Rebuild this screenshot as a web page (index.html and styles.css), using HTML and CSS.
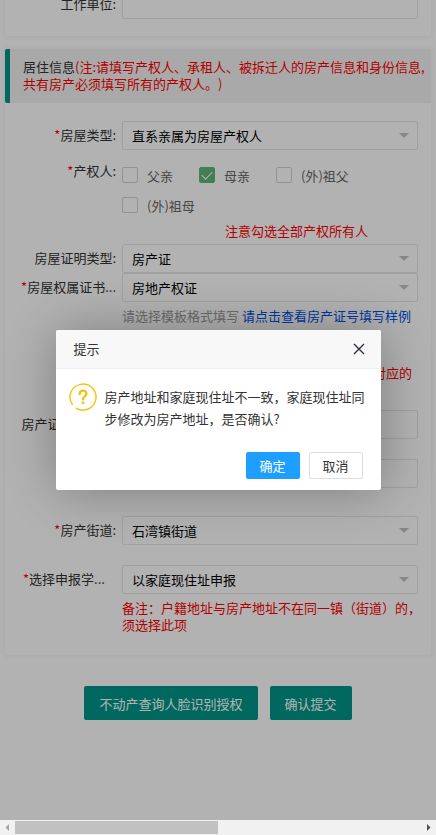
FILE: index.html
```html
<!DOCTYPE html>
<html lang="zh-CN">
<head>
    <meta charset="UTF-8">
    <meta name="viewport" content="width=device-width, initial-scale=1.0">
    <title>居住信息</title>
    <link rel="stylesheet" href="styles.css">
</head>
<body>
    <div class="viewport">
        <form class="page">
            <section class="card card-first">
                <div class="row">
                    <label class="label" for="company">工作单位:</label>
                    <div class="control"><input class="input" type="text" id="company"></div>
                </div>
            </section>

            <section class="card">
                <h2 class="card-title">居住信息<span class="red">(注:请填写产权人、承租人、被拆迁人的房产信息和身份信息,共有房产必须填写所有的产权人。)</span></h2>
                <div class="card-body">
                    <div class="row">
                        <label class="label" for="houseType"><span class="star">*</span>房屋类型:</label>
                        <div class="control select-box">
                            <select class="input" id="houseType"><option>直系亲属为房屋产权人</option></select>
                        </div>
                    </div>

                    <div class="row row-owner" role="group" aria-labelledby="ownerLabel">
                        <span class="label" id="ownerLabel"><span class="star">*</span>产权人:</span>
                        <div class="control checks">
                            <label class="check"><input type="checkbox">父亲</label>
                            <label class="check"><input type="checkbox" checked>母亲</label>
                            <label class="check"><input type="checkbox">(外)祖父</label>
                            <label class="check"><input type="checkbox">(外)祖母</label>
                        </div>
                    </div>
                    <p class="owner-note red">注意勾选全部产权所有人</p>

                    <div class="row">
                        <label class="label" for="certType">房屋证明类型:</label>
                        <div class="control select-box">
                            <select class="input" id="certType"><option>房产证</option></select>
                        </div>
                    </div>
                    <div class="row">
                        <label class="label" for="certBook"><span class="star">*</span>房屋权属证书...</label>
                        <div class="control">
                            <div class="select-box">
                                <select class="input" id="certBook"><option>房地产权证</option></select>
                            </div>
                            <p class="hint">请选择模板格式填写 <a href="#">请点击查看房产证号填写样例</a></p>
                        </div>
                    </div>

                    <p class="cert-note red">对应的</p>
                    <div class="row">
                        <label class="label" for="address">房产证详细地址:</label>
                        <div class="control"><input class="input" type="text" id="address"></div>
                    </div>
                    <div class="row row-gap">
                        <span class="label"></span>
                        <div class="control"><input class="input" type="text" aria-label="房产地址"></div>
                    </div>

                    <div class="row row-street">
                        <label class="label" for="street"><span class="star">*</span>房产街道:</label>
                        <div class="control select-box">
                            <select class="input" id="street"><option>石湾镇街道</option></select>
                        </div>
                    </div>
                    <div class="row row-gap">
                        <label class="label label-long" for="school"><span class="star">*</span>选择申报学...</label>
                        <div class="control">
                            <div class="select-box">
                                <select class="input" id="school"><option>以家庭现住址申报</option></select>
                            </div>
                            <p class="remark red">备注：户籍地址与房产地址不在同一镇（街道）的，须选择此项</p>
                        </div>
                    </div>
                </div>
            </section>

            <div class="actions">
                <button type="button" class="btn">不动产查询人脸识别授权</button>
                <button type="button" class="btn">确认提交</button>
            </div>
        </form>

        <div class="shade">
            <div class="dialog" role="dialog" aria-labelledby="dialogTitle">
                <div class="dialog-header">
                    <span id="dialogTitle">提示</span>
                    <button type="button" class="close" aria-label="关闭">
                        <svg width="12" height="12" viewBox="0 0 12 12" fill="none" stroke="#2e2d3c" stroke-width="1.4">
                            <path d="M1 1l10 10M11 1L1 11"/>
                        </svg>
                    </button>
                </div>
                <div class="dialog-content">
                    <svg class="ask" width="28" height="28" viewBox="0 0 28 28" fill="none" stroke="#f5c40d" stroke-linecap="round">
                        <path stroke-width="1.5" d="M7.500 25.300A13 13 0 1 0 3.300 21.400"/>
                        <path stroke-width="2.400" d="M10.700 11.100C10.700 6.500 17.400 6.600 17.400 10.700C17.400 13.400 14 13.300 14 16.300"/>
                        <circle cx="14" cy="19.800" r="1.500" fill="#f5c40d" stroke="none"/>
                    </svg>
                    <p>房产地址和家庭现住址不一致，家庭现住址同步修改为房产地址，是否确认?</p>
                </div>
                <div class="dialog-buttons">
                    <button type="button" class="dialog-btn primary">确定</button>
                    <button type="button" class="dialog-btn">取消</button>
                </div>
            </div>
        </div>
    </div>

    <div class="scrollbar">
        <svg width="15" height="15" viewBox="0 0 15 15" fill="#a3a3a3"><path d="M9 4v7L5.500 7.500z"/></svg>
        <div class="track"><div class="thumb"></div></div>
        <svg width="15" height="15" viewBox="0 0 15 15" fill="#505050"><path d="M6 4v7l3.500-3.500z"/></svg>
    </div>
</body>
</html>
```

FILE: styles.css
```css
* {
    box-sizing: border-box;
}
body {
    margin: 0;
    height: 100vh;
    display: flex;
    flex-direction: column;
    background-color: #fff;
    color: #333;
    font-family: "Noto Sans CJK SC", sans-serif;
    font-size: 13px;
    line-height: 17px;
    text-spacing-trim: space-all;
}
p, h2 {
    margin: 0;
}
button, input, select {
    font: inherit;
}
.red {
    color: #f00;
}
.viewport {
    position: relative;
    flex: 1;
    min-height: 0;
    overflow: hidden;
}
.page {
    margin: -10px 5px 0;
}
.card {
    margin-bottom: 13px;
    border-radius: 2px;
    box-shadow: 0 0 4px 1px rgba(0, 0, 0, 0.05);
}
.card-first {
    padding-bottom: 17px;
}
.card-title {
    padding: 9px 5px 11px 13px;
    border-left: 5px solid #009688;
    border-radius: 2px 0 0 2px;
    background-color: #f2f2f2;
    font-size: 13px;
    font-weight: 400;
}
.card-body {
    padding: 18px 0 22px;
}
.row {
    display: flex;
    padding-right: 13px;
}
.label {
    width: 117px;
    padding: 5px 6px 7px 0;
    text-align: right;
    white-space: nowrap;
}
.label-long {
    padding-left: 18px;
    text-align: left;
}
.star {
    color: #f00;
}
.control {
    flex: 1;
    min-width: 0;
}
.input {
    display: block;
    width: 100%;
    height: 29px;
    padding: 0 9px;
    border: 1px solid #e6e6e6;
    border-radius: 2px;
    background-color: #fff;
    color: #000;
    appearance: none;
}
.select-box {
    position: relative;
}
.select-box::after {
    content: "";
    position: absolute;
    right: 9px;
    top: 12px;
    border: 5px solid transparent;
    border-top-color: #c2c2c2;
    pointer-events: none;
}
.row-owner {
    padding-top: 7px;
}
.checks {
    display: flex;
    flex-wrap: wrap;
    gap: 14px 26px;
    padding-top: 10px;
}
.check {
    display: flex;
    align-items: center;
    gap: 9px;
    height: 16px;
    color: #666;
}
.check input {
    width: 16px;
    height: 16px;
    margin: 0;
    border: 1px solid #d2d2d2;
    border-radius: 2px;
    background-color: #fff;
    appearance: none;
}
.check input:checked {
    display: grid;
    place-items: center;
    border-color: #5fb878;
    background-color: #5fb878;
}
.check input:checked::after {
    content: "";
    width: 9px;
    height: 5px;
    margin-bottom: 3px;
    border: solid #fff;
    border-width: 0 0 1px 1px;
    transform: rotate(-45deg);
}
.owner-note {
    padding: 9px 0 5px 220px;
}
.hint {
    padding-top: 5px;
    color: #999;
    white-space: nowrap;
}
.hint a {
    color: #0050e6;
    text-decoration: none;
}
.cert-note {
    padding: 40px 19px 29px 0;
    text-align: right;
}
.row-gap {
    padding-top: 20px;
}
.row-street {
    padding-top: 28px;
}
.remark {
    margin-right: -8px;
    padding-top: 5px;
}
.actions {
    display: flex;
    justify-content: center;
    gap: 12px;
    margin-top: 31px;
}
.btn {
    height: 34px;
    padding: 0 15px;
    border: none;
    border-radius: 2px;
    background-color: #009688;
    color: #fff;
    cursor: pointer;
}

/* dialog */
.shade {
    position: absolute;
    inset: 0;
    display: flex;
    align-items: center;
    justify-content: center;
    background-color: rgba(0, 0, 0, 0.3);
}
.dialog {
    width: 325px;
    max-width: 90%;
    border-radius: 2px;
    background-color: #fff;
    box-shadow: 1px 1px 50px rgba(0, 0, 0, 0.3);
}
.dialog-header {
    display: flex;
    align-items: center;
    justify-content: space-between;
    height: 39px;
    padding: 0 16px 2px 18px;
    border-bottom: 1px solid #eee;
    border-radius: 2px 2px 0 0;
    background-color: #f8f8f8;
}
.close {
    display: flex;
    padding: 2px 0 0;
    border: none;
    background: none;
    cursor: pointer;
}
.dialog-content {
    display: flex;
    gap: 8px;
    padding: 17px 12px 22px 13px;
    line-height: 22px;
}
.ask {
    flex: none;
    margin-top: -3px;
}
.dialog-buttons {
    display: flex;
    justify-content: flex-end;
    gap: 9px;
    padding: 0 18px 11px;
}
.dialog-btn {
    width: 54px;
    height: 27px;
    padding: 0;
    border: 1px solid #dedede;
    border-radius: 2px;
    background-color: #fff;
    color: #333;
    cursor: pointer;
}
.dialog-btn.primary {
    border-color: #1e9fff;
    background-color: #1e9fff;
    color: #fff;
}

/* horizontal scrollbar */
.scrollbar {
    display: flex;
    height: 15px;
    background-color: #f1f1f1;
}
.track {
    flex: 1;
    padding: 1px 0;
}
.thumb {
    width: 50%;
    height: 13px;
    background-color: #c1c1c1;
}
```
